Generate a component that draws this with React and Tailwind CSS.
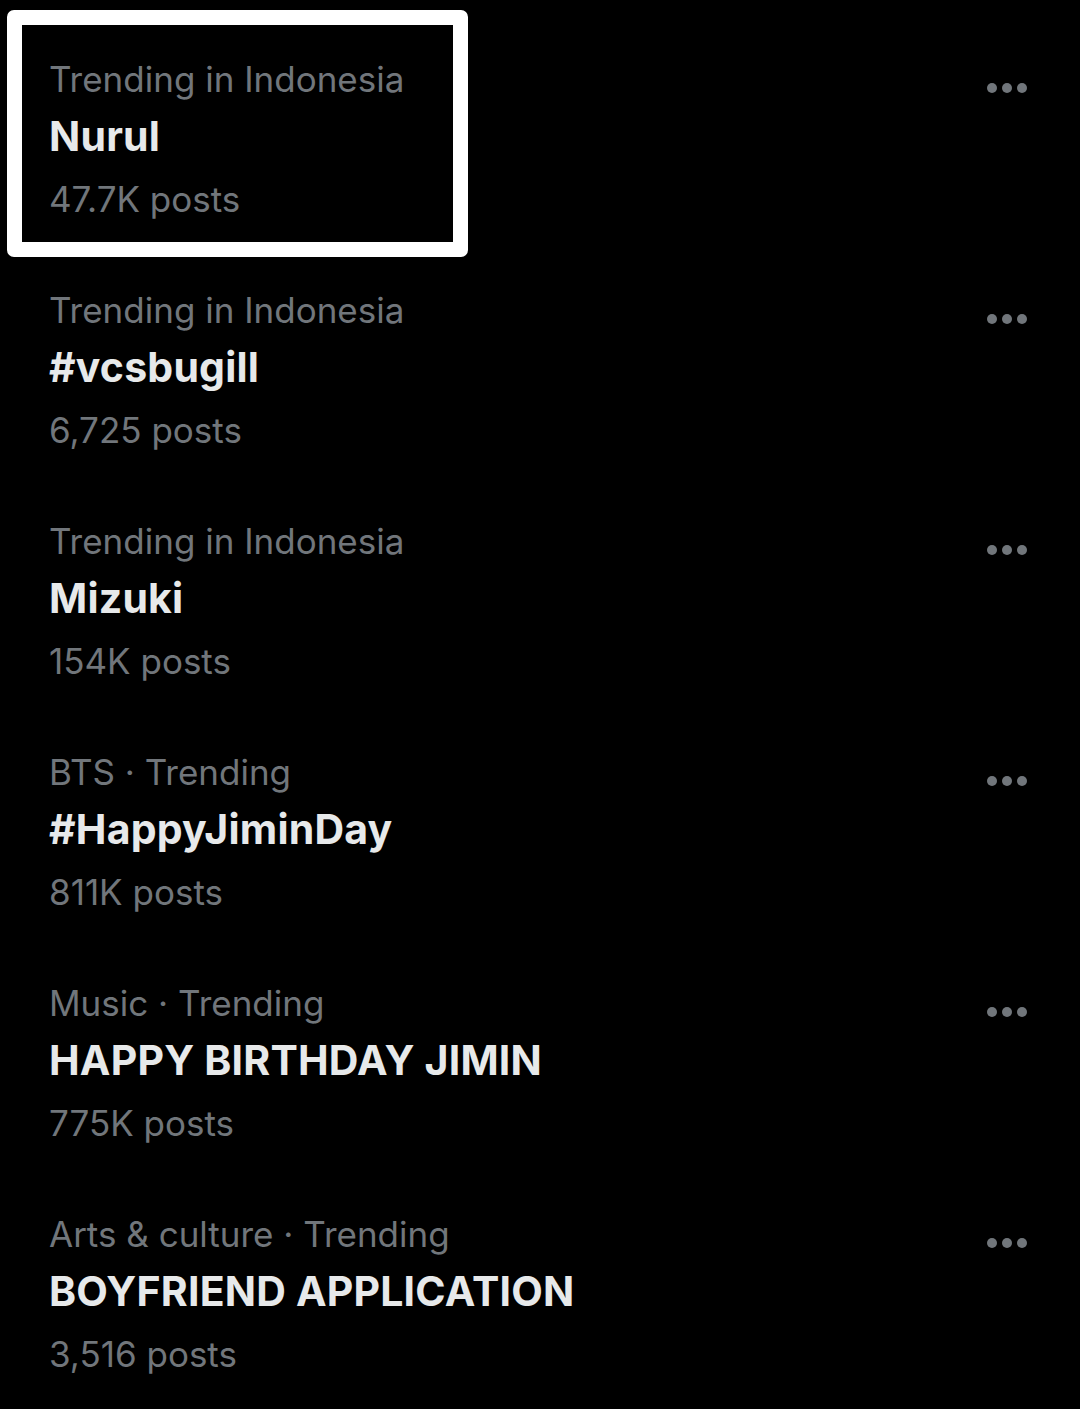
import React from 'react';

const trends = [
  { category: 'Trending in Indonesia', title: 'Nurul', posts: '47.7K posts' },
  { category: 'Trending in Indonesia', title: '#vcsbugill', posts: '6,725 posts' },
  { category: 'Trending in Indonesia', title: 'Mizuki', posts: '154K posts' },
  { category: 'BTS · Trending', title: '#HappyJiminDay', posts: '811K posts' },
  { category: 'Music · Trending', title: 'HAPPY BIRTHDAY JIMIN', posts: '775K posts' },
  { category: 'Arts & culture · Trending', title: 'BOYFRIEND APPLICATION', posts: '3,516 posts' },
];

const MoreDots = () => (
  <div className="self-start flex items-center gap-[5px] h-[10px] mt-[83px]">
    <span className="w-[10px] h-[10px] rounded-full bg-[#71767b]" />
    <span className="w-[10px] h-[10px] rounded-full bg-[#71767b]" />
    <span className="w-[10px] h-[10px] rounded-full bg-[#71767b]" />
  </div>
);

const TrendRow = ({ trend }) => (
  <div className="flex justify-between h-[231px] pl-[49px] pr-[53px]">
    <div className="flex flex-col pt-[55px]">
      <span className="text-[35px] leading-[48px] text-[#71767b]">{trend.category}</span>
      <span className="text-[41px] leading-[56px] mt-[5px] font-bold text-[#e7e9ea] tracking-[0.2px]">{trend.title}</span>
      <span className="text-[35px] leading-[48px] mt-[11px] text-[#71767b]">{trend.posts}</span>
    </div>
    <MoreDots />
  </div>
);

export default function App() {
  return (
    <div
      className="relative w-[1080px] h-[1409px] bg-black overflow-hidden"
      style={{ fontFamily: 'Inter, "Liberation Sans", sans-serif' }}
    >
      {trends.map((t, i) => (
        <TrendRow key={i} trend={t} />
      ))}
      {/* highlight box around the first trend */}
      <div className="absolute left-[7px] top-[10px] w-[461px] h-[247px] border-[15px] border-white rounded-[7px] pointer-events-none" />
    </div>
  );
}
